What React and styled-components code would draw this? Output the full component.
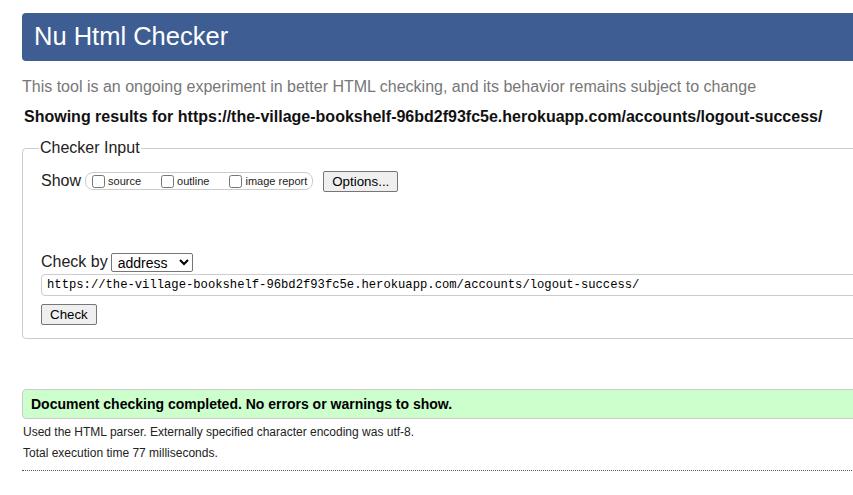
import React from "react";
import styled, { createGlobalStyle } from "styled-components";

const GlobalStyle = createGlobalStyle`
    html, body {
        margin: 0;
        padding: 0;
        background: #fff;
        overflow: hidden;
    }
    body {
        font-family: "Liberation Sans", Arial, sans-serif;
        color: #000;
    }
`

const url = "https://the-village-bookshelf-96bd2f93fc5e.herokuapp.com/accounts/logout-success/"

function App() {
    return (
        <>
            <GlobalStyle />
            <Page>
                <Header>
                    <h1>Nu Html Checker</h1>
                </Header>
                <Intro>This tool is an ongoing experiment in better HTML checking, and its behavior remains subject to change</Intro>
                <Results>Showing results for {url}</Results>

                <Fieldset>
                    <legend>Checker Input</legend>
                    <ShowRow>
                        <span className="show-label">Show</span>
                        <CheckGroup>
                            <label><input type="checkbox" />source</label>
                            <label><input type="checkbox" />outline</label>
                            <label><input type="checkbox" />image report</label>
                        </CheckGroup>
                        <Button type="button">Options...</Button>
                    </ShowRow>

                    <CheckByRow>
                        <span>Check by</span>
                        <Select defaultValue="address">
                            <option value="address">address</option>
                            <option value="file">file upload</option>
                            <option value="text">text input</option>
                        </Select>
                    </CheckByRow>
                    <UrlInput type="url" defaultValue={url} />
                    <Button type="button">Check</Button>
                </Fieldset>

                <Success>Document checking completed. No errors or warnings to show.</Success>
                <Details>Used the HTML parser. Externally specified character encoding was utf-8.</Details>
                <Details>Total execution time 77 milliseconds.</Details>
                <Rule />
            </Page>
        </>
    )
}

export default App

const Page = styled.div`
    width: 880px;
    padding: 13px 0 0 22px;
`

const Header = styled.div`
    display: flex;
    align-items: center;
    height: 48px;
    padding: 0 12px;
    background-color: #3e5d92;
    border-radius: 4px;

    h1 {
        margin: 0;
        font-size: 25.5px;
        font-weight: normal;
        color: #fff;
        line-height: 1;
        padding-bottom: 1px;
    }
`

const Intro = styled.p`
    margin: 17px 0 0;
    font-size: 16px;
    line-height: 18px;
    color: #777;
`

const Results = styled.p`
    margin: 12px 0 0 2px;
    font-size: 16px;
    line-height: 18px;
    font-weight: bold;
    color: #111;
`

const Fieldset = styled.fieldset`
    margin: 13px 0 0;
    padding: 14px 18px 13px;
    border: 1px solid #ccc;
    border-radius: 4px;

    legend {
        margin-left: -2px;
        padding: 0 1px;
        font-size: 16px;
        color: #222;
    }
`

const ShowRow = styled.div`
    display: flex;
    align-items: center;
    height: 20px;

    .show-label {
        font-size: 16px;
        margin-right: 4px;
        color: #222;
    }
`

const CheckGroup = styled.div`
    display: flex;
    align-items: center;
    height: 16px;
    padding: 0 5px 0 6px;
    border: 1px solid #ccc;
    border-radius: 8px;
    margin-right: 10px;

    label {
        display: flex;
        align-items: center;
        font-size: 11px;
        color: #222;
        margin-right: 20px;
    }

    label:last-child {
        margin-right: 0;
    }

    input {
        margin: 0 3px 0 0;
        width: 13px;
        height: 13px;
    }
`

const Button = styled.button`
    font-family: "Liberation Sans", Arial, sans-serif;
    font-size: 13.33px;
    padding: 1px 8px;
    height: 21px;
    color: #000;
    background: #efefef;
    border: 1px solid #767676;
    border-radius: 2px;
`

const CheckByRow = styled.div`
    display: flex;
    align-items: center;
    margin-top: 61px;
    height: 20px;

    span {
        font-size: 16px;
        color: #222;
        margin-right: 3px;
    }
`

const Select = styled.select`
    font-family: "Liberation Sans", Arial, sans-serif;
    font-size: 14px;
    width: 82px;
    height: 19px;
    padding: 0 2px;
    border: 1px solid #767676;
    border-radius: 2px;
    background: #fff;
    color: #000;
`

const UrlInput = styled.input`
    display: block;
    box-sizing: border-box;
    width: 100%;
    height: 22px;
    margin: 2px 0 8px;
    padding: 0 5px;
    font-family: "Liberation Mono", "DejaVu Sans Mono", monospace;
    font-size: 12.2px;
    color: #000;
    border: 1px solid #ccc;
    border-radius: 4px;
    outline: none;
`

const Success = styled.p`
    margin: 50px 0 0;
    padding: 0 8px;
    height: 28px;
    line-height: 28px;
    font-size: 14px;
    font-weight: bold;
    background-color: #ccffcc;
    border: 1px solid #ccc;
    border-radius: 4px;
    color: #000;
`

const Details = styled.p`
    margin: 6px 0 0 1px;
    font-size: 12px;
    line-height: 14px;
    color: #222;

    & + & {
        margin-top: 7px;
    }
`

const Rule = styled.hr`
    margin: 10px 0 0;
    border: none;
    border-top: 1px dotted #555;
`
